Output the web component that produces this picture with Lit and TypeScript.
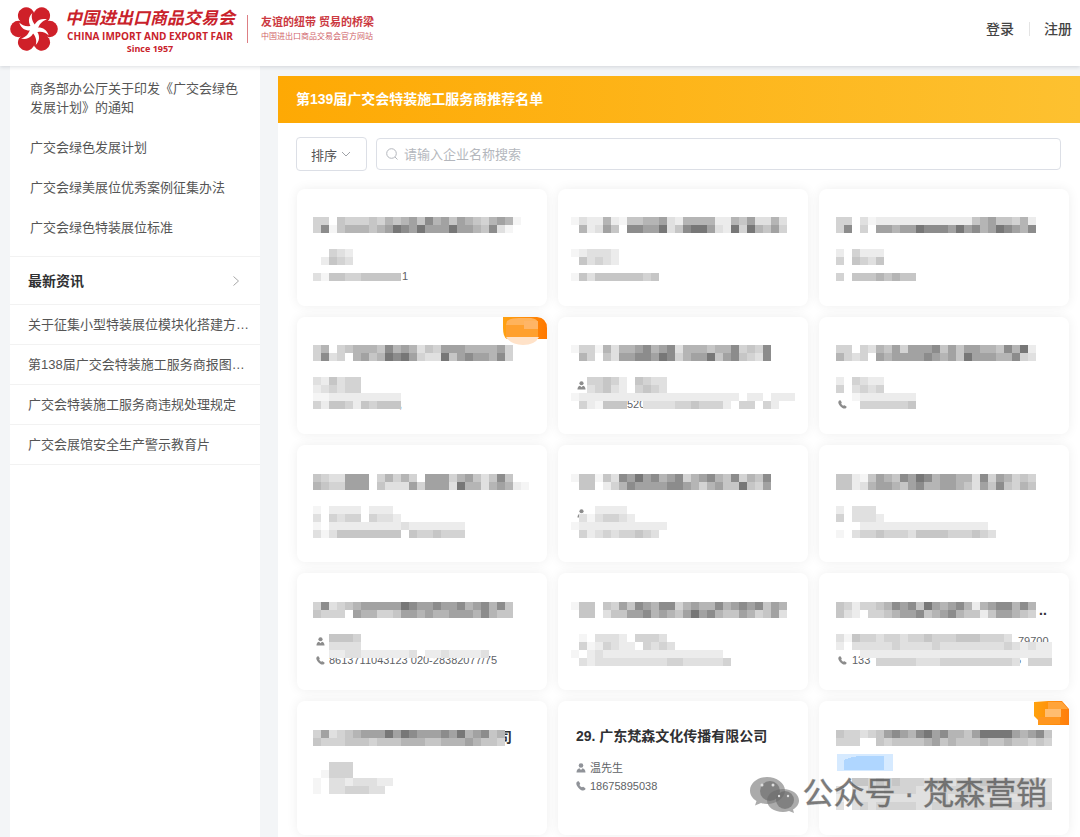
import { LitElement, html, svg, css, nothing } from "lit";
import { customElement, property } from "lit/decorators.js";

/* Grey levels of the masked blocks, from faint (1) to dark (9). */
const SHADES: Record<string, string> = {
  "1": "#f5f5f5", "2": "#ececec", "3": "#e0e0e0", "4": "#d3d3d3", "5": "#c6c6c6",
  "6": "#b5b5b5", "7": "#a2a2a2", "8": "#8c8c8c", "9": "#777777",
};
const CELL = 8;

interface Remnant { x: number; y: number; text: string; bold?: boolean; }
interface Company {
  name?: string;
  contact?: string;
  phone?: string;
  badge?: "wide" | "narrow";
  tag?: boolean;
  origin?: number;
  top?: number;
  rows?: string[];
  remnants?: Remnant[];
  icons?: { kind: "user" | "phone"; x: number; y: number }[];
}

const COMPANIES: Company[] = [
  { origin: 16, top: 28, rows: [
      "44.54445465675867576546761", "4815666567987977797765831", "", "",
      "..432", ".2543", "", "31554455555"],
    remnants: [{ x: 105, y: 91, text: "1" }] },
  { origin: 13, top: 28, rows: [
      "132262155667326666226573363", ".62375.88779358997329496574", "", "",
      "123332", ".53432", "", "15355555545"] },
  { origin: 17, top: 28, rows: [
      "44.3122222222222256755462", "48.4.77677988879786798768", "", "",
      "2.4222", "4.5435", "", "4.55565655"] },
  { badge: "wide", origin: 16, top: 28, rows: [
      "46.4566658676354777666674", "4834.67569897433957877684", "", "",
      "325344", "234344", "11222222222", "42554254555"],
    remnants: [{ x: 102, y: 91, text: "," }] },
  { origin: 13, top: 28, rows: [
      "1441636678678366656684548", ".64.537788798467795785438", "", "",
      "..44542.5433", "..34532.4543", "122222222222222222222.22.222", ".421555..33334454442.44.42"],
    remnants: [{ x: 69, y: 91, text: "520" }],
    icons: [{ kind: "user", x: 19, y: 64 }] },
  { origin: 17, top: 28, rows: [
      "44.4365747778575776658692", "6434.76777787675977766843", "", "",
      "2.4322", "4.3434", "..12222222", "...4444445"],
    icons: [{ kind: "phone", x: 19, y: 83 }] },
  { origin: 16, top: 29, rows: [
      "5433777.46464.77746753585", "6544777.5333747773966367621", "", "",
      "1.2222.222", "3.4344.4332", "1.22222222232222222", "31355555555.5445444"] },
  { origin: 13, top: 29, rows: [
      "1551538797867846786584658", ".55.246877778876467559547", "", "",
      "...2222", ".3134432", "122222222222", ".4234344543"],
    icons: [{ kind: "user", x: 19, y: 64 }] },
  { origin: 17, top: 29, rows: [
      "5521576587986776638476454", "5523677657866776537585465", "", "",
      "2.333", "4.3332", "...2222222222222222", "1.344544435555444543"] },
  { origin: 16, top: 29, rows: [
      "4834567777798778778678685", "5444.76644577676677768655", "", "",
      "..5554", "..3333", "..22332222223.22322223", ""],
    remnants: [{ x: 32, y: 91, text: "8613711043123 020-28382077/75" }],
    icons: [{ kind: "user", x: 19, y: 64 }, { kind: "phone", x: 19, y: 83 }] },
  { origin: 13, top: 29, rows: [
      "155.54758768846766867878576", ".55.35577867657978655764573", "", "",
      ".1.3332.4443", ".4124322.4343", "1.23222222222222222", ".3233333333344333334"] },
  { origin: 17, top: 29, rows: [
      "5424456878597678626788686", "532.445677856786552577654", "", "",
      "3154434434454445554443.....", "2.3333343333433333333432322", "...222222222222222222222222", ".....444443334444444443.444"],
    remnants: [{ x: 199, y: 72, text: "79700" }, { x: 33, y: 91, text: "133" }, { x: 196, y: 91, text: "6" }, { x: 220, y: 42, text: "..", bold: true }],
    icons: [{ kind: "phone", x: 19, y: 83 }] },
  { origin: 16, top: 29, rows: [
      "473456777979877787967856", "544455545556665566676554", "", "",
      "..444", ".1444", "1.33233322", "1.3344433"],
    remnants: [{ x: 201, y: 41, text: "司", bold: true }] },
  { name: "29. 广东梵森文化传播有限公司", contact: "温先生", phone: "18675895038" },
  { badge: "narrow", tag: true, origin: 17, top: 29, rows: [
      "544345787689786657999976785", "444..5455556756555655655454", "", "", "", "",
      "..5545454443443444554444433", "3.3343444433344454444443333", "2.3333333333343333333333333", "3.3434444433444444444444444"] },
];

const userIcon = svg`<circle cx="5" cy="2.5" r="2.3"/><path d="M.5 9.5C.5 6.8 2 5.6 3.4 5.3L5 7l1.6-1.7C8 5.600 9.500 6.800 9.500 9.500z"/>`;
const phoneIcon = svg`<path d="M.8 1.100C1.600.2 2.500.1 3.100.8l.9 1.500c.3.600.1 1-.4 1.500-.2.500 1.700 2.500 2.400 2.500.500-.5 1-.7 1.600-.3l1.400.9c.7.5.7 1.200 0 1.900C7.300 10.400 4.800 9.300 2.800 7.200.8 5.200-.4 2.600.8 1.100z"/>`;

@customElement("company-card")
export class CompanyCard extends LitElement {
  @property({ attribute: false }) company: Company = {};

  static styles = css`
    :host {
      display: block;
      position: relative;
      box-sizing: border-box;
      background: #fff;
      border-radius: 8px;
      box-shadow: 0 0 12px rgba(0, 0, 0, 0.07);
      min-height: 117px;
      font-family: "Liberation Sans", "Noto Sans CJK SC", sans-serif;
    }
    .body { padding: 25px 18px 23px; }
    h3 { margin: 0 0 13px; font-size: 14px; line-height: 20px; font-weight: 700; color: #303133; white-space: nowrap; }
    .line { display: flex; align-items: center; gap: 4px; font-size: 11px; line-height: 18px; color: #606266; }
    .line svg { fill: #909399; }
    .masked { display: block; overflow: visible; }
    .masked text { font-size: 11px; fill: #606266; }
    .masked text.title { font-size: 14px; font-weight: 700; fill: #303133; }
    .masked .icon { fill: #8c8c8c; }
    .badge { position: absolute; right: 0; top: 0; display: block; }
  `;

  private badge(kind: string) {
    if (kind === "wide") {
      return html`<svg class="badge" width="44" height="28" viewBox="0 0 44 28" aria-hidden="true">
        <defs><linearGradient id="o"><stop offset="0" stop-color="#ffa212"/><stop offset="1" stop-color="#ff7800"/></linearGradient></defs>
        <path d="M0 0H34Q44 1 44 11V22H4Q0 20 0 11z" fill="url(#o)"/>
        <path d="M4 4Q8 1 16 1H28Q35 2 35 6V12H21V8H3z" fill="#ffb35c"/><rect x="3" y="8" width="32" height="12" fill="#ffa02e"/>
        <path d="M21 4H35V12H21z" fill="#ffb566"/>
        <path d="M3 20H36Q32 28 20 28Q8 28 3 20z" fill="#ffe2c8"/>
      </svg>`;
    }
    return html`<svg class="badge" width="35" height="24" viewBox="0 0 35 24" aria-hidden="true">
      <defs><linearGradient id="p"><stop offset="0" stop-color="#ffa20d"/><stop offset="1" stop-color="#ff7d0c"/></linearGradient></defs>
      <path d="M0 1L14 0H28L35 8V24H4V19L0 15z" fill="url(#p)"/>
      <path d="M14 1H28L34 8H14z" fill="#ffa43a"/><rect x="11" y="8" width="16" height="8" fill="#ffbd70"/><rect x="4" y="16" width="22" height="7" fill="#ff9620"/>
    </svg>`;
  }

  private masked(c: Company) {
    const top = c.top ?? 28;
    const x0 = c.origin ?? 16;
    const height = c.tag ? 134 : 117;
    return html`<svg class="masked" width="250" height=${height} viewBox="0 0 250 ${height}" shape-rendering="crispEdges">
      ${(c.remnants ?? []).map(r => svg`<text class=${r.bold ? "title" : ""} x=${r.x} y=${r.y}>${r.text}</text>`)}
      ${(c.icons ?? []).map(i => svg`<g class="icon" shape-rendering="auto" transform="translate(${i.x} ${i.y}) scale(.9)">${i.kind === "user" ? userIcon : phoneIcon}</g>`)}
      ${(c.rows ?? []).map((row, r) => [...row].map((k, n) => SHADES[k]
        ? svg`<rect x=${x0 + n * CELL} y=${top + r * CELL} width=${CELL} height=${CELL} fill=${SHADES[k]}/>` : nothing))}
      ${c.tag ? svg`<rect x="18" y="53" width="56" height="17" fill="#d6eaff"/><path d="M25 59Q34 55 42 55H65V69H25z" fill="#afd6ff"/>` : nothing}
    </svg>`;
  }

  render() {
    const c = this.company;
    return html`
      ${c.name ? html`<div class="body">
        <h3>${c.name}</h3>
        <div class="line"><svg width="10" height="10" viewBox="0 0 10 10" aria-hidden="true">${userIcon}</svg><span>${c.contact}</span></div>
        <div class="line"><svg width="10" height="10" viewBox="0 0 10 10" aria-hidden="true">${phoneIcon}</svg><span>${c.phone}</span></div>
      </div>` : this.masked(c)}
      ${c.badge ? this.badge(c.badge) : nothing}`;
  }
}

const GREEN_DOCS = [
  "商务部办公厅关于印发《广交会绿色发展计划》的通知",
  "广交会绿色发展计划",
  "广交会绿美展位优秀案例征集办法",
  "广交会绿色特装展位标准",
];
const NEWS = [
  "关于征集小型特装展位模块化搭建方…",
  "第138届广交会特装施工服务商报图…",
  "广交会特装施工服务商违规处理规定",
  "广交会展馆安全生产警示教育片",
];

@customElement("app-root")
export class AppRoot extends LitElement {
  static styles = css`
    :host {
      display: flex;
      flex-direction: column;
      position: relative;
      min-height: 100vh;
      background: #f3f5f7;
      color: #555;
      font-family: "Liberation Sans", "Noto Sans CJK SC", sans-serif;
      font-size: 13px;
    }
    a { color: inherit; text-decoration: none; }
    header {
      display: flex;
      align-items: center;
      justify-content: space-between;
      box-sizing: border-box;
      height: 66px;
      padding: 0 8px 8px 10px;
      background: #fff;
      box-shadow: 0 1px 4px rgba(0, 21, 41, 0.14);
      z-index: 1;
    }
    .brand { display: flex; align-items: center; }
    .flower { display: block; margin-right: 7px; }
    .names { display: flex; flex-direction: column; align-items: center; padding-top: 4px; color: #c9222b; font-family: "Open Sans", "Noto Sans CJK SC", sans-serif; font-weight: 700; white-space: nowrap; }
    .cn { font-size: 17px; line-height: 22px; font-style: italic; }
    .en { font-size: 10px; line-height: 14px; }
    .since { font-size: 9px; line-height: 12px; }
    .slogan { display: flex; flex-direction: column; margin-left: 12px; padding-left: 13px; border-left: 1px solid #dd7f84; color: #cc3a42; white-space: nowrap; }
    .slogan strong { font-size: 11px; line-height: 15px; font-weight: 700; }
    .slogan small { font-size: 8px; line-height: 13px; color: #d0646a; }
    nav.account { display: flex; align-items: center; font-size: 14px; line-height: 20px; font-weight: 500; color: #444; }
    nav.account a + a { margin-left: 15px; padding-left: 15px; background: linear-gradient(#e4e4e4, #e4e4e4) left center / 1px 14px no-repeat; }
    .page { flex: 1; display: flex; align-items: stretch; gap: 18px; padding-left: 10px; }
    aside { flex: 0 0 250px; min-width: 0; padding-top: 3px; background: #fff; box-sizing: border-box; }
    ul { list-style: none; margin: 0; padding: 0; }
    .docs { padding-bottom: 8px; border-bottom: 1px solid #f2f2f2; }
    .docs a { display: block; padding: 10px 20px 11px; line-height: 19px; }
    aside h2 { display: flex; align-items: center; justify-content: space-between; margin: 0; padding: 0 18px; height: 47px; border-bottom: 1px solid #f2f2f2; font-size: 14px; line-height: 20px; color: #303133; }
    .news a { display: block; padding: 0 10px 0 18px; line-height: 39px; border-bottom: 1px solid #f2f2f2; white-space: nowrap; }
    main { flex: 1; min-width: 0; margin-top: 10px; background: #fff; }
    h1 { margin: 0; padding: 0 18px; font-size: 14px; line-height: 47px; color: #fff; background: linear-gradient(90deg, #fea904, #fdc130); }
    .tools { display: flex; align-items: center; gap: 9px; padding: 14px 19px 0 18px; }
    .sort { display: flex; align-items: center; justify-content: space-between; box-sizing: border-box; width: 71px; height: 34px; padding: 0 15px 0 14px; border: 1px solid #dcdfe6; border-radius: 4px; background: #fff; color: #555; font: inherit; }
    .search { flex: 1; display: flex; align-items: center; gap: 6px; box-sizing: border-box; height: 32px; padding: 0 9px; border: 1px solid #dcdfe6; border-radius: 4px; }
    .search input { flex: 1; min-width: 0; border: 0; outline: 0; padding: 0; background: none; font: inherit; color: #555; }
    .search input::placeholder { color: #b4b7bd; opacity: 1; }
    .grid { display: grid; grid-template-columns: repeat(3, minmax(0, 1fr)); gap: 11px; padding: 18px 11px 2px 19px; }
    svg { display: block; flex: none; }
    .watermark { position: absolute; right: 33px; bottom: 20px; display: flex; align-items: center; gap: 3px; font-size: 31px; line-height: 46px; color: rgba(90, 90, 90, 0.78); -webkit-text-stroke: 1px rgba(90, 90, 90, 0.35); white-space: nowrap; pointer-events: none; }
  `;

  private flower() {
    const turns = [0, 60, 120, 180, 240, 300];
    return html`<svg class="flower" width="48" height="46" viewBox="-24 -23 48 46" role="img" aria-label="广交会">
      <g fill="#cf2029">
        <circle r="13"/>
        ${turns.map(a => svg`<circle transform="rotate(${a})" cx="15.500" cy="0" r="8.300"/>`)}
      </g>
      <g fill="#fff">
        <circle r="2.500"/>
        ${turns.map(a => svg`<path transform="rotate(${a})" d="M-1 1C0-6 5-11.500 13-9.500C8.500-8.500 5-5 3.500 1z"/>`)}
      </g>
    </svg>`;
  }

  render() {
    return html`
      <header>
        <div class="brand">
          ${this.flower()}
          <div class="names">
            <span class="cn">中国进出口商品交易会</span>
            <span class="en">CHINA IMPORT AND EXPORT FAIR</span>
            <span class="since">Since 1957</span>
          </div>
          <div class="slogan">
            <strong>友谊的纽带 贸易的桥梁</strong>
            <small>中国进出口商品交易会官方网站</small>
          </div>
        </div>
        <nav class="account"><a href="#login">登录</a><a href="#register">注册</a></nav>
      </header>
      <div class="page">
        <aside>
          <ul class="docs">${GREEN_DOCS.map(t => html`<li><a href="#doc">${t}</a></li>`)}</ul>
          <h2>最新资讯
            <svg width="12" height="12" viewBox="0 0 12 12" fill="none" stroke="#a8a8a8" aria-hidden="true"><path d="M3.500 1.500L8.500 6L3.500 10.500"/></svg>
          </h2>
          <ul class="news">${NEWS.map(t => html`<li><a href="#news">${t}</a></li>`)}</ul>
        </aside>
        <main>
          <h1>第139届广交会特装施工服务商推荐名单</h1>
          <div class="tools">
            <button class="sort" type="button">排序
              <svg width="10" height="10" viewBox="0 0 10 10" fill="none" stroke="#a0a3a8" aria-hidden="true"><path d="M1 3L5 7L9 3"/></svg>
            </button>
            <label class="search">
              <svg width="12" height="12" viewBox="0 0 12 12" fill="none" stroke="#b4b7bd" aria-hidden="true"><circle cx="5.500" cy="5.500" r="4.800"/><path d="M9 9L11.500 11.500"/></svg>
              <input type="text" placeholder="请输入企业名称搜索" aria-label="请输入企业名称搜索" />
            </label>
          </div>
          <div class="grid">${COMPANIES.map(c => html`<company-card .company=${c}></company-card>`)}</div>
        </main>
      </div>
      <div class="watermark">
        <svg width="49" height="37" viewBox="0 0 49 37" aria-hidden="true">
          <path d="M17 1C7.500 1 0 7 0 14.500C0 19 2.500 22.500 6.500 25L5 29.500L11 27C13 27.600 15 28 17 28C26.500 28 35 22 35 14.500C35 7 26.500 1 17 1z" fill="#777" fill-opacity=".62"/>
          <path d="M33 13C24 13 17 18 17 24.500C17 31 24 36 33 36C35 36 37 35.600 39 35L44 37L43 33.500C46.500 31.500 49 28.500 49 24.500C49 18 42 13 33 13z" fill="#777" fill-opacity=".62"/>
          <circle cx="20" cy="15" r="10" fill="#666" fill-opacity=".6"/><circle cx="35" cy="24" r="9" fill="#666" fill-opacity=".6"/>
          <g fill="#ddd"><circle cx="12" cy="9" r="1.500"/><circle cx="23" cy="9" r="1.500"/><circle cx="29" cy="20" r="1.200"/><circle cx="38" cy="20" r="1.200"/></g>
        </svg>
        <span>公众号 · 梵森营销</span>
      </div>`;
  }
}
